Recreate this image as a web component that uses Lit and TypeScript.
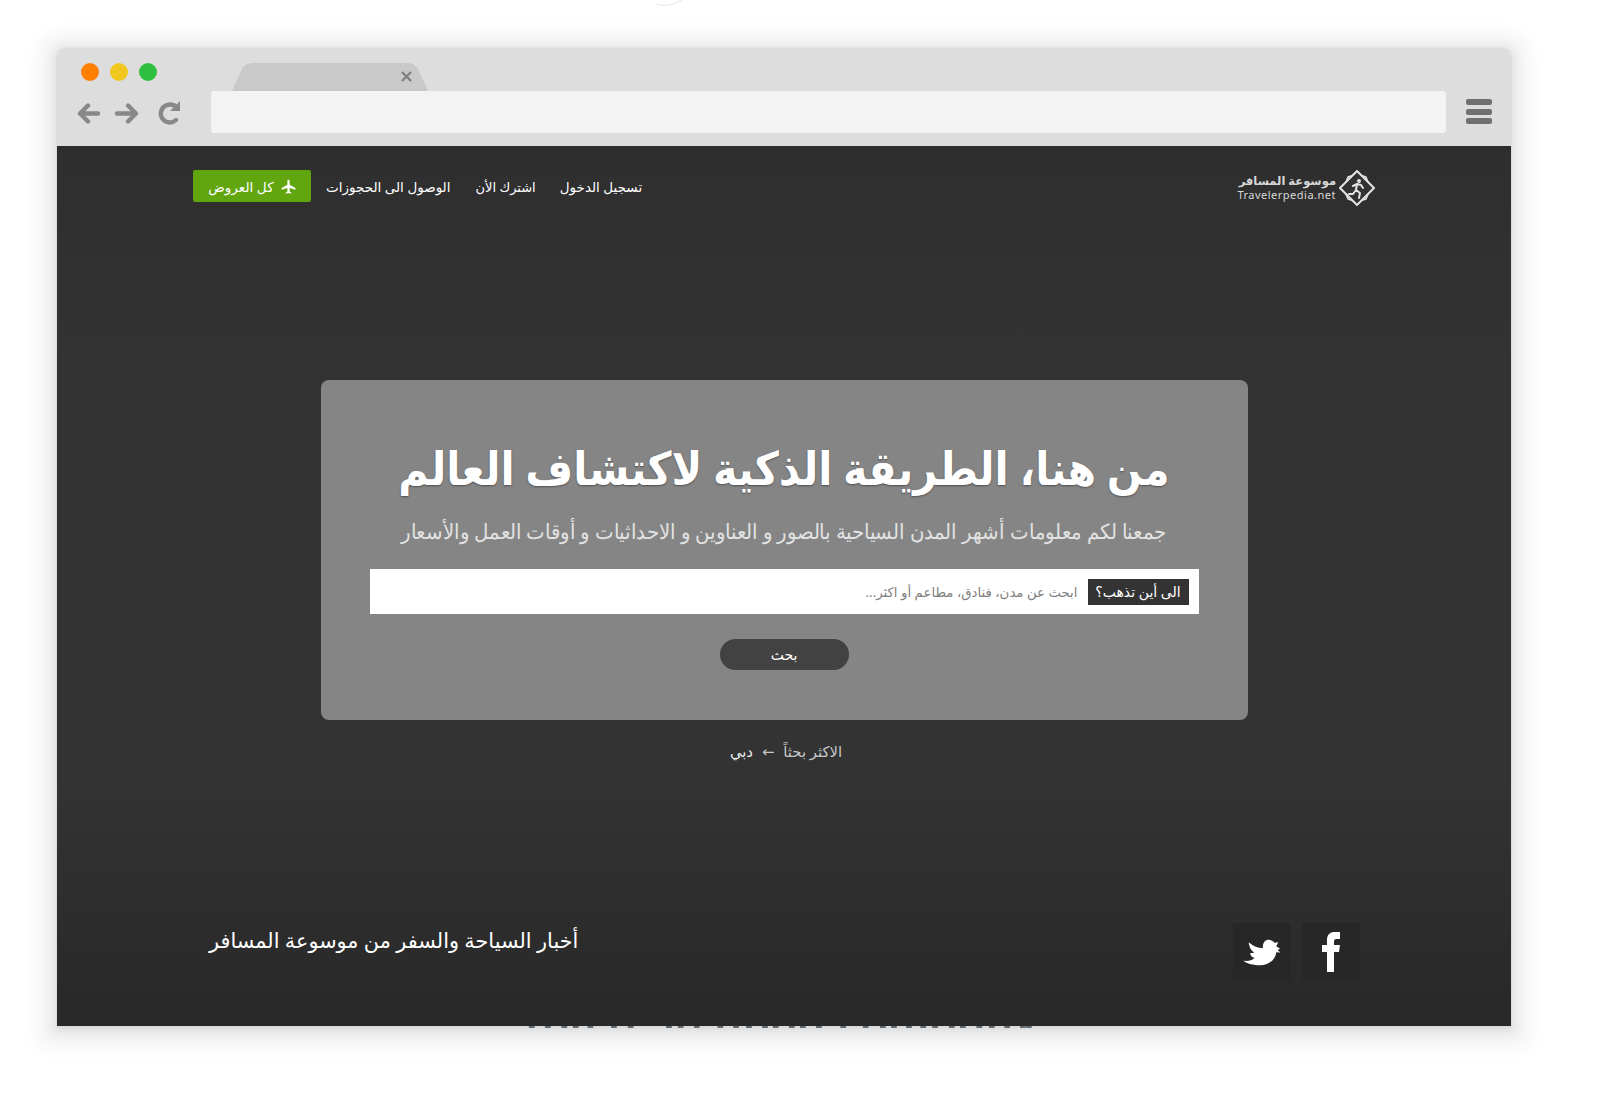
import { LitElement, html, css, svg } from "lit";
import { customElement } from "lit/decorators.js";

const DASHES = [81,126,172,204,245,311,358,465,498,543,609,653,689,734,764,809,840,885,953,1016,1064,1095,1137,1177,1210,1257,1288,1334,1369,1412,1456,1473];

@customElement("app-root")
export class AppRoot extends LitElement {
  static styles = css`
    :host { display: block; height: 1101px; background: #fff; position: relative; overflow: hidden;
      font-family: "Noto Sans", "DejaVu Sans", sans-serif; box-sizing: border-box; padding: 48px 89px 0 57px; }
    * { box-sizing: border-box; }
    .arc { position: absolute; left: 650px; top: 0; }
    .win { height: 978px; display: flex; flex-direction: column; border-radius: 8px 8px 0 0; position: relative;
      box-shadow: 0 0 0 1px rgba(0,0,0,.025), 0 3px 6px rgba(0,0,0,.07), 0 3px 10px 8px rgba(0,0,0,.05), 0 3px 16px 20px rgba(0,0,0,.04); }
    .chrome { height: 98px; flex: none; background: #dddddd; border-radius: 8px 8px 0 0; display: flex; position: relative; }
    .lights { position: absolute; left: 24px; top: 15px; display: flex; gap: 11px; }
    .light { width: 18px; height: 18px; border-radius: 50%; }
    .o { background: #ff7f00; } .y { background: #f0c71f; } .g { background: #2fbf3f; }
    .tab { position: absolute; left: 175px; top: 15px; }
    .navicons { position: absolute; left: 20px; top: 52px; }
    .addr { position: absolute; left: 154px; right: 65px; top: 43px; height: 42px; background: #f3f3f3; border-radius: 3px; }
    .menu { position: absolute; right: 19px; top: 51px; width: 26px; display: flex; flex-direction: column; gap: 3.5px; }
    .menu i { display: block; height: 6px; background: #707070; border-radius: 2px; }
    .page { flex: 1; display: flex; flex-direction: column; align-items: center; color: #fff;
      background: linear-gradient(#2e2e2e 0, #333 25%, #333 72%, #282828 100%); position: relative; }
    .nav { width: 100%; padding: 24px 136px 0 136px; height: 56px; display: flex; justify-content: space-between; align-items: center; direction: ltr; }
    .links { display: flex; align-items: center; font-size: 13.5px; direction: rtl; }
    .links a { color: #fff; white-space: nowrap; padding-top: 2px; }
    .l1 { margin-left: 15px; } .l2 { margin-left: 25px; font-size: 13px; } .l3 { margin-left: 24px; }
    .offer { width: 118px; height: 32px; background: #62a60f; border-radius: 2px; display: flex; align-items: center; justify-content: center; gap: 7px; direction: rtl; color: #fff; font-size: 13.6px; }
    .logo { display: flex; align-items: center; gap: 3px; padding-top: 3px; }
    .logot { display: flex; flex-direction: column; align-items: flex-end; color: #d8d8d8; }
    .logot b { font-weight: 700; font-size: 11.5px; line-height: 14px; direction: rtl; }
    .logot span { font-size: 11px; line-height: 14px; letter-spacing: .5px; }
    .panel { margin-top: 178px; width: 927px; height: 340px; background: #858585; border-radius: 8px; padding: 49px 49px 0; display: flex; flex-direction: column; align-items: center; direction: rtl; }
    h1 { margin: 0; font-size: 46px; line-height: 76px; font-weight: 700; white-space: nowrap; text-shadow: 0 1px 2px rgba(0,0,0,.4); transform: scaleX(.897); }
    .sub { margin-top: 4px; height: 44px; font-size: 21px; line-height: 44px; color: #e2e2e2; white-space: nowrap; font-weight: 300; transform: scaleX(.94); }
    .field { margin-top: 16px; width: 829px; height: 45px; background: #fff; display: flex; align-items: center; padding-right: 10px; flex: none; }
    .where { width: 101px; height: 26px; background: #333; color: #fff; font-size: 14px; line-height: 26px; text-align: center; white-space: nowrap; }
    .ph { margin-right: 10px; color: #808080; font-size: 13.3px; white-space: nowrap; }
    .go { margin-top: 25px; width: 129px; height: 31px; border-radius: 16px; background: #424242; color: #fff; font-size: 14px; line-height: 31px; text-align: center; flex: none; }
    .most { margin-top: 19px; font-size: 14.8px; line-height: 24px; direction: rtl; display: flex; gap: 9px; color: #c8c8c8; margin-left: 4px; }
    .most em { font-style: normal; color: #eee; }
    .foot { margin-top: auto; width: 100%; height: 103px; padding: 0 151px 0 152px; display: flex; justify-content: space-between; direction: ltr; flex: none; position: relative; }
    .news { font-size: 20.8px; line-height: 28px; margin-top: 3px; direction: rtl; white-space: nowrap; }
    .soc { display: flex; gap: 11px; }
    .soc div { width: 58px; height: 58px; background: #272727; display: flex; align-items: center; justify-content: center; }
    .dashes { position: absolute; left: 443px; bottom: -2px; display: block; }
  `;
  render() {
    return html`
      <svg class="arc" width="40" height="10" viewBox="0 0 40 10"><path d="M6 4 Q 18 8 32 0" fill="none" stroke="#eee" stroke-width="1.5"/></svg>
      <div class="win">
        <div class="chrome">
          <div class="lights"><div class="light o"></div><div class="light y"></div><div class="light g"></div></div>
          <svg class="tab" width="197" height="28" viewBox="0 0 197 28">
            <path d="M0 28 L9 8 Q12 0 22 0 H175 Q184 0 187 8 L196 28 Z" fill="#c9c9c9"/>
            <path d="M170 9 L179 18 M179 9 L170 18" stroke="#808080" stroke-width="2.4"/>
          </svg>
          <svg class="navicons" width="112" height="28" viewBox="0 0 112 28" fill="none" stroke="#888" stroke-width="4.4" stroke-linecap="round" stroke-linejoin="round">
            <path d="M21 13.5 H4 M11 5.5 L3 13.5 L11 21.5"/>
            <path d="M40 13.5 H58 M51 5.5 L59 13.5 L51 21.5"/>
            <path d="M99 20 A9 9 0 1 1 100 8"/>
            <path d="M103 1 V11 H93 Z" fill="#888" stroke="none"/>
          </svg>
          <div class="addr"></div>
          <div class="menu"><i></i><i></i><i></i></div>
        </div>
        <div class="page">
          <div class="nav">
            <div class="links">
              <a class="l3">تسجيل الدخول</a><a class="l2">اشترك الأن</a><a class="l1">الوصول الى الحجوزات</a>
              <div class="offer">
                <svg width="15" height="15" viewBox="0 0 24 24" fill="#fff"><path d="M12 1c-1 0-1.800 1-1.800 2.200V9L1 14.500V17l9.200-2.600V20L7.500 21.800V23.500L12 22.300l4.500 1.200V21.800L13.800 20V14.400L23 17V14.500L13.800 9V3.200C13.800 2 13 1 12 1z"/></svg>
                <span>كل العروض</span>
              </div>
            </div>
            <div class="logo">
              <div class="logot"><b>موسوعة المسافر</b><span>Travelerpedia.net</span></div>
              <svg width="36" height="36" viewBox="0 0 36 36" fill="none" stroke="#e4e4e4">
                <path d="M9 7 Q18 3 27 7 Q33 18 27 29 Q18 33 9 29 Q3 18 9 7 Z" stroke-width="1.500"/>
                <path d="M18 1 L35 18 L18 35 L1 18 Z" fill="#333" stroke-width="2"/>
                <circle cx="20" cy="11" r="2" fill="#e4e4e4" stroke="none"/>
                <path d="M14 16 L18 14 L22 15 L24 18 M18 14 L17 20 L21 23 L20 28 M17 20 L14 24 L10 24" stroke-width="2" stroke-linecap="round" stroke-linejoin="round"/>
              </svg>
            </div>
          </div>
          <div class="panel">
            <h1>من هنا، الطريقة الذكية لاكتشاف العالم</h1>
            <div class="sub">جمعنا لكم معلومات أشهر المدن السياحية بالصور و العناوين و الاحداثيات و أوقات العمل والأسعار</div>
            <div class="field"><div class="where">الى أين تذهب؟</div><div class="ph">ابحث عن مدن، فنادق، مطاعم أو اكثر...</div></div>
            <div class="go">بحث</div>
          </div>
          <div class="most"><span>الاكثر بحثاً</span><span>←</span><em>دبي</em></div>
          <div class="foot">
            <div class="news">أخبار السياحة والسفر من موسوعة المسافر</div>
            <div class="soc">
              <div>
                <svg width="40" height="31" viewBox="124 104 126 92" fill="#fff"><path d="M128 176 C144 178 156 174 164 167 C154 165 150 158 150 152 C156 152 160 152 163 150 C152 145 147 132 145 118 C158 130 175 137 190 137 C188 120 197 110 208 110 C216 110 222 114 226 119 L238 118 L232 130 L244 138 L236 142 L245 150 L232 149 C230 172 208 190 182 190 C160 190 140 186 128 176 Z"/></svg>
              </div>
              <div>
                <svg width="18" height="40" viewBox="0 0 18 40" fill="#fff"><path d="M5 40 V20 H0 V13 H5 V8 C5 2.500 8 0 13 0 H18 V7 H14.500 C12.500 7 12 8 12 10 V13 H18 L17 20 H12 V40 Z"/></svg>
              </div>
            </div>
          </div>
          <svg class="dashes" width="540" height="2" viewBox="0 0 540 2">
            ${DASHES.map((d) => svg`<rect x=${d / 2.8} y="0" width="5.700" height="2" fill="#5f6b75"/>`)}
          </svg>
        </div>
      </div>
    `;
  }
}
